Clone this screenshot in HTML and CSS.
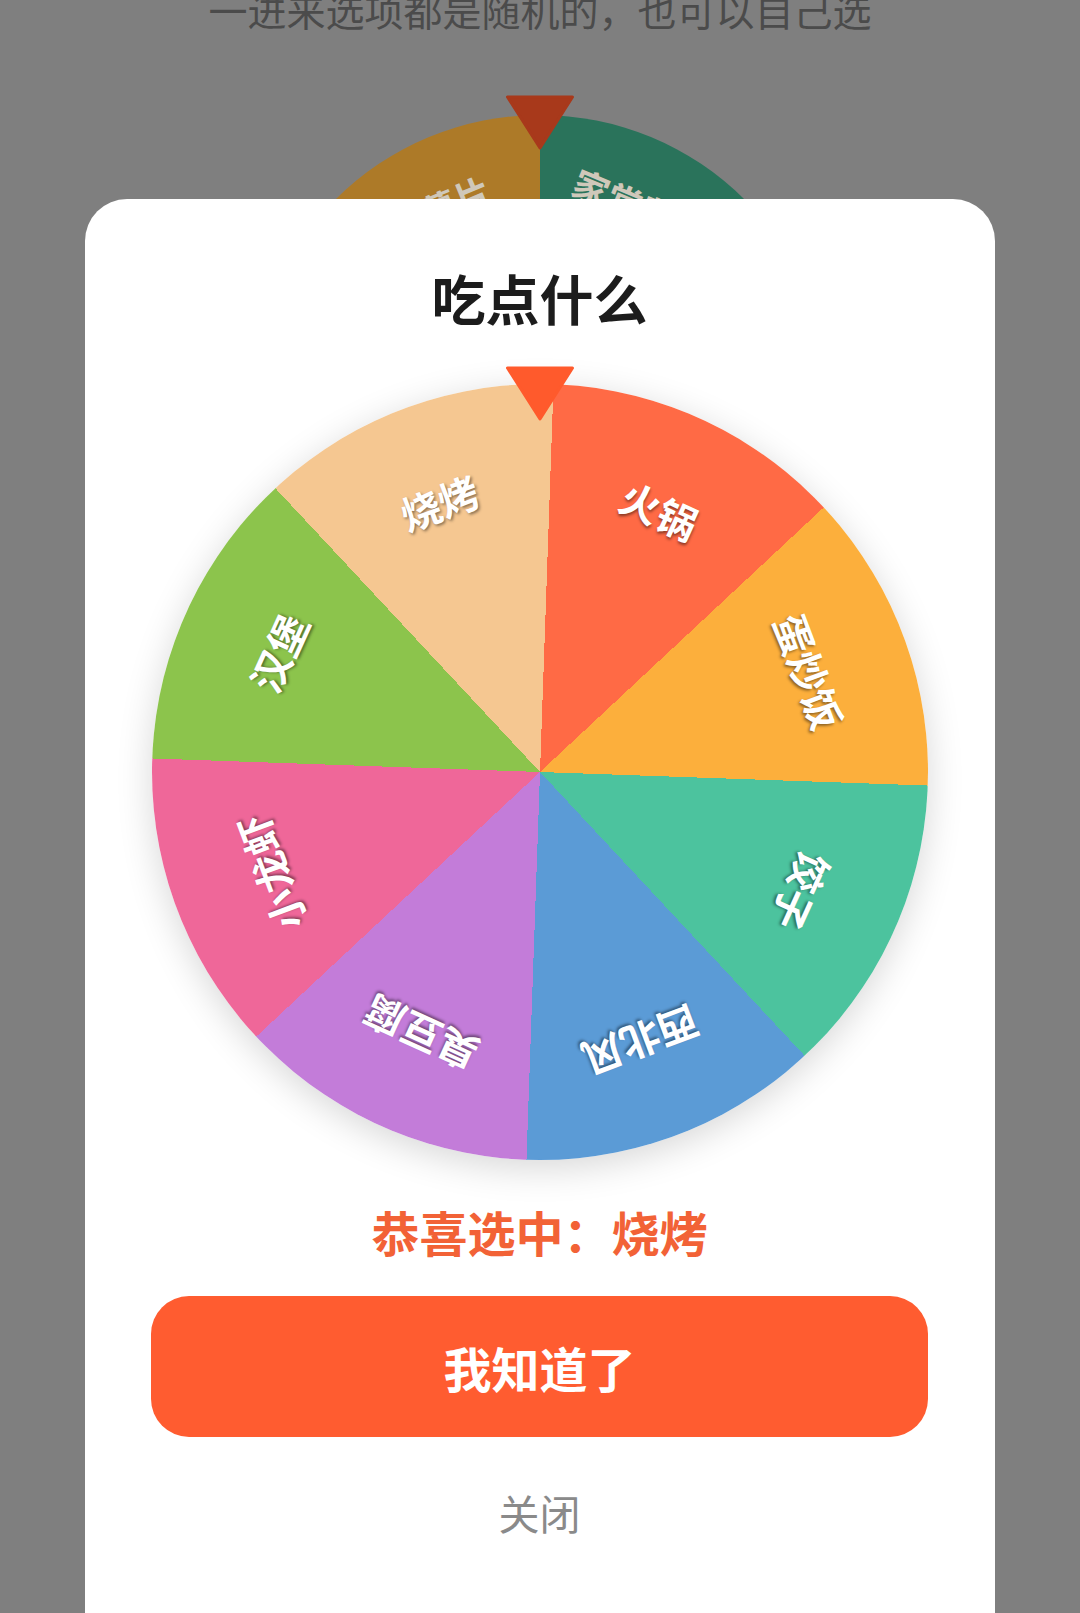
FILE: index.html
```html
<!DOCTYPE html>
<html lang="zh-CN">
<head>
<meta charset="utf-8">
<title>吃点什么</title>
<link rel="stylesheet" href="styles.css">
</head>
<body>
<div class="page">
  <p class="hint">一进来选项都是随机的，也可以自己选</p>
  <div class="bg-wheel-wrap">
    <svg class="bg-pointer" viewBox="0 0 71 55" width="71" height="55"><path d="M3 2 L68 2 L35.5 53 Z" /></svg>
    <div class="bg-wheel">
      <span class="bg-label" style="--a:-22.5deg">薯片</span>
      <span class="bg-label" style="--a:22.5deg">家常菜</span>
    </div>
  </div>
</div>

<div class="modal">
  <h1 class="modal-title">吃点什么</h1>
  <div class="wheel-wrap">
    <svg class="pointer" viewBox="0 0 71 55" width="71" height="55"><path d="M3 2 L68 2 L35.5 53 Z" /></svg>
    <div class="wheel">
      <span class="label" style="--a:24.5deg">火锅</span>
      <span class="label" style="--a:69.5deg">蛋炒饭</span>
      <span class="label" style="--a:114.5deg">饺子</span>
      <span class="label" style="--a:159.5deg">西北风</span>
      <span class="label" style="--a:204.5deg">臭豆腐</span>
      <span class="label" style="--a:249.5deg">小龙虾</span>
      <span class="label" style="--a:294.5deg">汉堡</span>
      <span class="label" style="--a:339.5deg">烧烤</span>
    </div>
  </div>
  <p class="result">恭喜选中：烧烤</p>
  <button class="btn-primary" type="button">我知道了</button>
  <button class="btn-close" type="button">关闭</button>
</div>
</body>
</html>
```

FILE: styles.css
```css
html, body {
  margin: 0;
  padding: 0;
}

body {
  width: 1080px;
  height: 1613px;
  overflow: hidden;
  position: relative;
  background: #7f7f7f;
  font-family: "Noto Sans CJK SC", "Noto Sans", sans-serif;
}

/* dimmed page behind the modal */
.page {
  display: flex;
  flex-direction: column;
  align-items: center;
}

.hint {
  margin: -11px 0 0;
  font-size: 39px;
  line-height: 40px;
  color: #4b4b4b;
  text-align: center;
  white-space: nowrap;
}

.bg-wheel-wrap {
  position: relative;
  margin-top: 86px;
  width: 580px;
  height: 580px;
}

.bg-pointer {
  position: absolute;
  top: -20px;
  left: 50%;
  transform: translateX(-50%);
  z-index: 2;
}

.bg-pointer path {
  fill: #a8391b;
  stroke: #a8391b;
  stroke-width: 3;
  stroke-linejoin: round;
}

.bg-wheel {
  position: relative;
  width: 580px;
  height: 580px;
  border-radius: 50%;
  background: conic-gradient(
    #2a735b 0deg 45deg,
    #7f5a2a 45deg 90deg,
    #266457 90deg 135deg,
    #2e4e6b 135deg 180deg,
    #623e6c 180deg 225deg,
    #773450 225deg 270deg,
    #466226 270deg 315deg,
    #ad7a28 315deg 360deg
  );
}

.bg-label {
  position: absolute;
  left: 50%;
  top: 50%;
  transform: translate(-50%, -50%) rotate(var(--a)) translateY(-222px);
  font-size: 36px;
  line-height: 1;
  font-weight: 700;
  color: #cfc8ba;
  white-space: nowrap;
}

/* modal card */
.modal {
  position: absolute;
  left: 85px;
  top: 199px;
  width: 910px;
  height: 1480px;
  box-sizing: border-box;
  padding: 69px 67px 0 66px;
  background: #ffffff;
  border-radius: 42px;
  display: flex;
  flex-direction: column;
  align-items: center;
}

.modal-title {
  margin: 0;
  font-size: 54px;
  line-height: 60px;
  font-weight: 700;
  color: #1c1c1c;
}

.wheel-wrap {
  position: relative;
  margin-top: 56px;
  width: 776px;
  height: 776px;
}

.pointer {
  position: absolute;
  top: -18px;
  left: 50%;
  transform: translateX(-50%);
  z-index: 2;
}

.pointer path {
  fill: #ff5a2c;
  stroke: #ff5a2c;
  stroke-width: 3;
  stroke-linejoin: round;
}

.wheel {
  position: relative;
  width: 776px;
  height: 776px;
  border-radius: 50%;
  box-shadow: 0 8px 36px rgba(0, 0, 0, 0.16);
  background: conic-gradient(
    from 2deg,
    #ff6a45 0deg 45deg,
    #fcaf3c 45deg 90deg,
    #4cc39e 90deg 135deg,
    #5b9bd6 135deg 180deg,
    #c37cd9 180deg 225deg,
    #ef6799 225deg 270deg,
    #8cc44c 270deg 315deg,
    #f5c791 315deg 360deg
  );
}

.label {
  position: absolute;
  left: 50%;
  top: 50%;
  transform: translate(-50%, -50%) rotate(var(--a)) translateY(-288px);
  font-size: 40px;
  line-height: 1;
  font-weight: 700;
  color: #ffffff;
  white-space: nowrap;
  text-shadow: 1px 2px 3px rgba(0, 0, 0, 0.45);
}

.result {
  margin: 41px 0 0;
  font-size: 48px;
  line-height: 60px;
  font-weight: 700;
  color: #f26236;
}

.btn-primary {
  margin-top: 35px;
  width: 100%;
  height: 141px;
  border: none;
  border-radius: 38px;
  background: #ff5c30;
  color: #ffffff;
  font-family: inherit;
  font-size: 48px;
  font-weight: 700;
  line-height: 1;
  padding: 0;
}

.btn-close {
  margin-top: 50px;
  border: none;
  background: none;
  padding: 0;
  font-family: inherit;
  font-size: 41px;
  line-height: 50px;
  font-weight: 400;
  color: #8a8a8a;
}
```
